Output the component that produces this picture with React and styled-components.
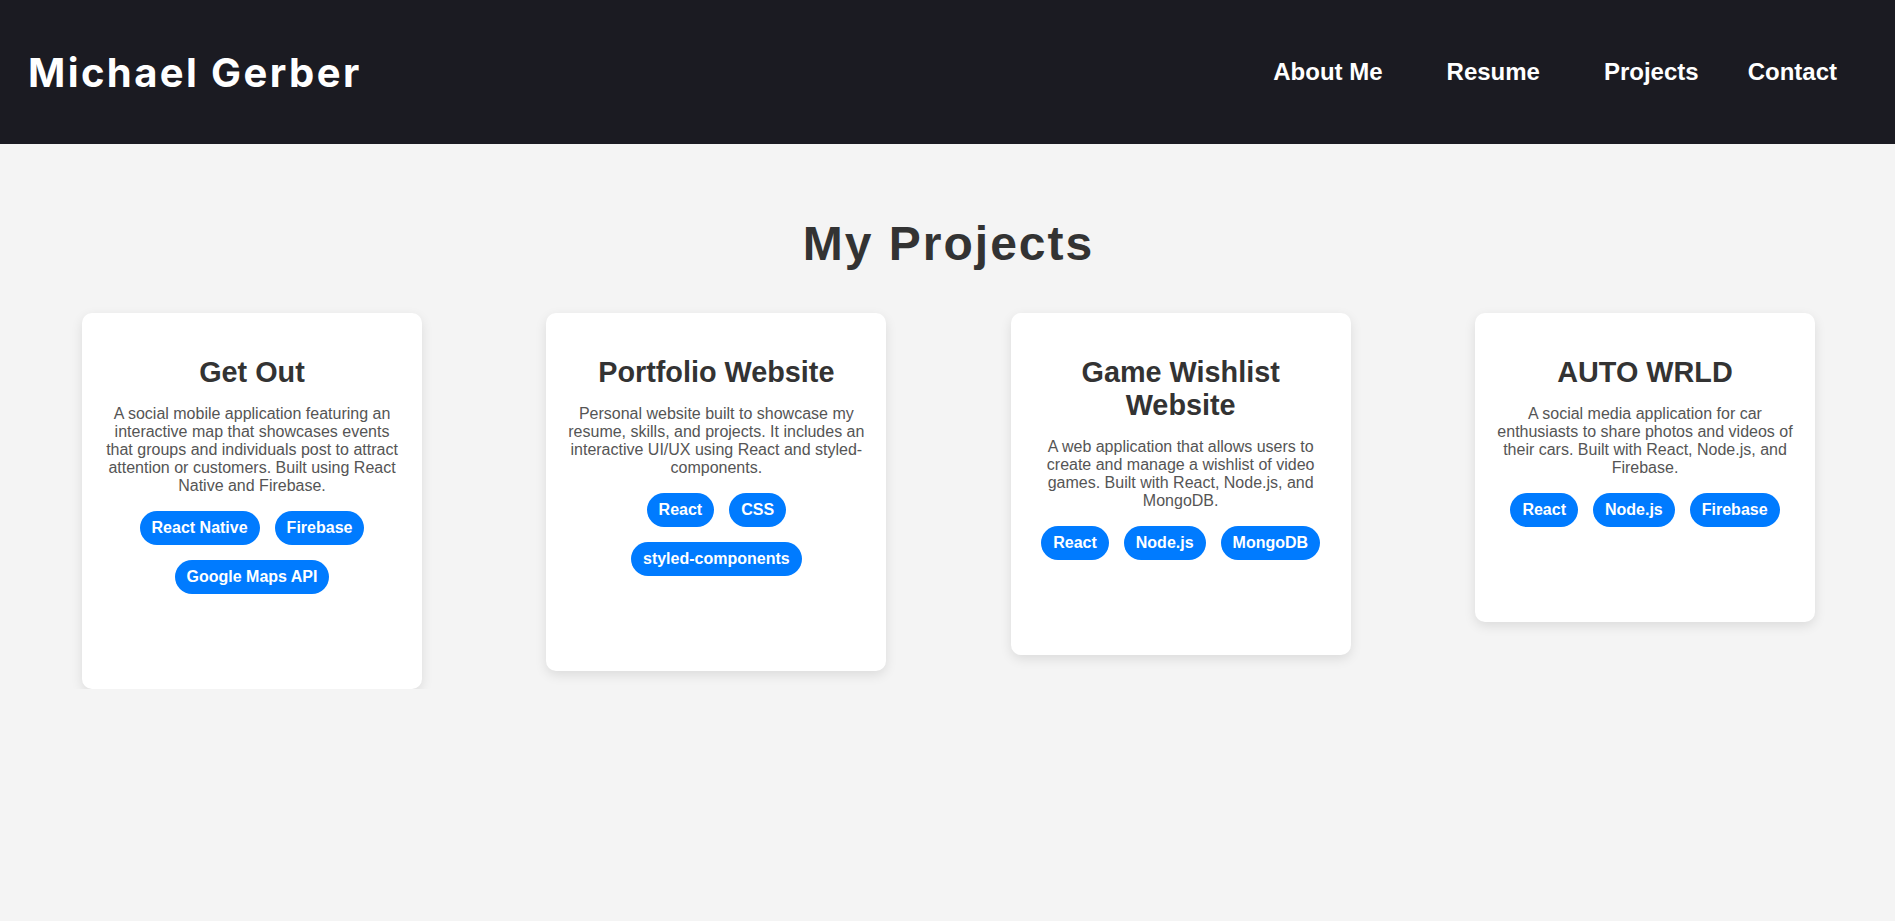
import React from "react";
import styled, { createGlobalStyle } from "styled-components";

const GlobalStyle = createGlobalStyle`
  html, body {
    margin: 0;
    padding: 0;
    background-color: #f4f4f4;
    font-family: "Liberation Sans", Arial, sans-serif;
  }
`;

const Header = styled.header`
  height: 144px;
  background-color: #1b1b22;
  display: flex;
  align-items: center;
  justify-content: space-between;
  padding: 0 58px 0 28px;
`;

const Logo = styled.h1`
  margin: 0;
  color: #ffffff;
  font-family: Inter, "Open Sans", sans-serif;
  font-weight: 700;
  font-size: 40px;
  letter-spacing: 2.4px;
`;

const Nav = styled.nav`
  display: flex;
  align-items: center;
`;

const NavLink = styled.a`
  color: #ffffff;
  text-decoration: none;
  font-weight: 700;
  font-size: 24px;
  margin-left: ${(p) => p.$gap};
  cursor: pointer;
`;

const Main = styled.main`
  padding: 0 80px 0 82px;
`;

const Title = styled.h2`
  margin: 0;
  padding: 72px 0 42px;
  text-align: center;
  color: #333333;
  font-size: 48px;
  font-weight: 700;
  letter-spacing: 2px;
`;

const Grid = styled.div`
  display: flex;
  justify-content: space-between;
  align-items: flex-start;
`;

const Card = styled.div`
  width: 340px;
  box-sizing: border-box;
  padding: 43px 20px 95px;
  background-color: #ffffff;
  border-radius: 10px;
  box-shadow: 0 4px 12px rgba(0, 0, 0, 0.1);
  text-align: center;
`;

const CardTitle = styled.h3`
  margin: 0 0 16px;
  color: #333333;
  font-size: 28.8px;
  font-weight: 700;
`;

const Description = styled.p`
  margin: 0 0 16px;
  color: #555555;
  font-size: 16px;
`;

const Tags = styled.div`
  display: flex;
  flex-wrap: wrap;
  justify-content: center;
  gap: 15px;
`;

const Tag = styled.span`
  display: inline-block;
  padding: 8px 12px;
  background-color: #007bff;
  color: #ffffff;
  font-size: 16px;
  font-weight: 700;
  border-radius: 20px;
`;

const links = [
  { label: "About Me", gap: "0" },
  { label: "Resume", gap: "64px" },
  { label: "Projects", gap: "64px" },
  { label: "Contact", gap: "49px" },
];

const projects = [
  {
    title: "Get Out",
    description:
      "A social mobile application featuring an interactive map that showcases events that groups and individuals post to attract attention or customers. Built using React Native and Firebase.",
    tags: ["React Native", "Firebase", "Google Maps API"],
  },
  {
    title: "Portfolio Website",
    description:
      "Personal website built to showcase my resume, skills, and projects. It includes an interactive UI/UX using React and styled-components.",
    tags: ["React", "CSS", "styled-components"],
  },
  {
    title: "Game Wishlist Website",
    description:
      "A web application that allows users to create and manage a wishlist of video games. Built with React, Node.js, and MongoDB.",
    tags: ["React", "Node.js", "MongoDB"],
  },
  {
    title: "AUTO WRLD",
    description:
      "A social media application for car enthusiasts to share photos and videos of their cars. Built with React, Node.js, and Firebase.",
    tags: ["React", "Node.js", "Firebase"],
  },
];

const App = () => {
  return (
    <>
      <GlobalStyle />
      <Header>
        <Logo>Michael Gerber</Logo>
        <Nav>
          {links.map((link) => (
            <NavLink key={link.label} $gap={link.gap}>
              {link.label}
            </NavLink>
          ))}
        </Nav>
      </Header>
      <Main>
        <Title>My Projects</Title>
        <Grid>
          {projects.map((project) => (
            <Card key={project.title}>
              <CardTitle>{project.title}</CardTitle>
              <Description>{project.description}</Description>
              <Tags>
                {project.tags.map((tag) => (
                  <Tag key={tag}>{tag}</Tag>
                ))}
              </Tags>
            </Card>
          ))}
        </Grid>
      </Main>
    </>
  );
};

export default App;
